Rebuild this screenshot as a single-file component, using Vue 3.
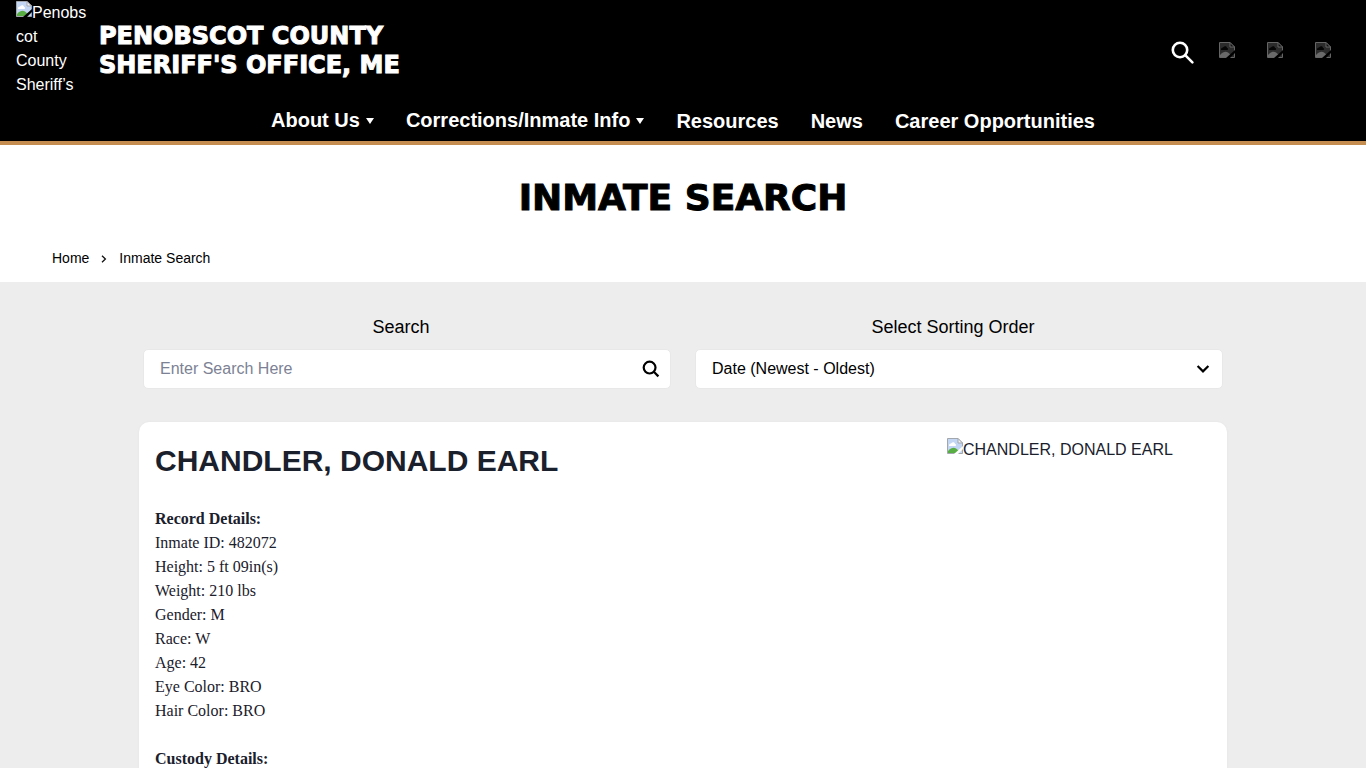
<script setup>
import { ref } from 'vue'

const query = ref('')
const order = ref('newest')

const navItems = [
  { label: 'About Us', menu: true },
  { label: 'Corrections/Inmate Info', menu: true },
  { label: 'Resources' },
  { label: 'News' },
  { label: 'Career Opportunities' },
]

const details = [
  'Inmate ID: 482072',
  'Height: 5 ft 09in(s)',
  'Weight: 210 lbs',
  'Gender: M',
  'Race: W',
  'Age: 42',
  'Eye Color: BRO',
  'Hair Color: BRO',
]
</script>

<template>
  <div class="page">
    <svg class="defs" width="0" height="0" aria-hidden="true">
      <symbol id="missing" viewBox="0 0 16 16">
        <path d="M0.5 0.5H11L15.5 5V15.5H0.5Z" fill="#c3d6f3" stroke="#a2a7ad" />
        <path d="M2 7.5C2 5.5 4 5.7 4.5 5C5.5 3.5 8 4 8 6C9.5 6 9.5 8 8 8H2Z" fill="#fff" />
        <path d="M1 15V13C4 9.5 7 9 9 10.5L12 13V15Z" fill="#58ad43" />
        <path d="M11 0.5V5H15.5Z" fill="#f4f4f4" stroke="#a2a7ad" />
        <path class="tear" d="M7 16L16 8V11L11 16Z" />
      </symbol>
    </svg>

    <header class="header">
      <div class="brand-row">
        <a class="brand" href="#">
          <span class="seal"><span class="start"><svg class="missing"><use href="#missing" /></svg>Penobs</span><wbr>cot County Sheriff’s</span>
          <span class="brand-name">PENOBSCOT COUNTY<br>SHERIFF'S OFFICE, ME</span>
        </a>
        <div class="tools">
          <button class="tool-search" type="button" aria-label="Search site">
            <svg width="24" height="24" viewBox="0 0 24 24" fill="none" stroke="#fff" stroke-width="2.6">
              <circle cx="9" cy="9" r="7.2" /><path d="M14.2 14.2L21.4 21.4" stroke-linecap="round" />
            </svg>
          </button>
          <a v-for="n in 3" :key="n" class="social" href="#" :aria-label="'Social link ' + n">
            <svg width="16" height="16" viewBox="0 0 16 16">
              <path d="M0.5 0.5H11L15.5 5V15.5H0.5Z" fill="#2c2c2c" stroke="#656565" />
              <path d="M2 7.5C2 5.5 4 5.7 4.5 5C5.5 3.5 8 4 8 6C9.5 6 9.5 8 8 8H2Z" fill="#050505" />
              <path d="M1 15V13C4 9.5 7 9 9 10.5L12 13V15Z" fill="#6a6a6a" />
              <path d="M11 0.5V5H15.5Z" fill="#111" stroke="#656565" />
              <path d="M7 16L16 8V11L11 16Z" fill="#000" />
            </svg>
          </a>
        </div>
      </div>
      <nav class="nav" aria-label="Main">
        <a v-for="item in navItems" :key="item.label" href="#" :class="{ menu: item.menu }">
          {{ item.label }}<svg v-if="item.menu" width="8" height="8" viewBox="0 0 8 8"><path d="M0 2H8L4 8Z" fill="#fff" /></svg>
        </a>
      </nav>
    </header>

    <div class="heading">
      <h1>INMATE SEARCH</h1>
      <nav class="crumbs" aria-label="Breadcrumb">
        <a href="#">Home</a>
        <svg width="6" height="10" viewBox="0 0 6 10" fill="none" stroke="#111" stroke-width="1.3"><path d="M1 2.7L4.4 6L1 9.3" /></svg>
        <span>Inmate Search</span>
      </nav>
    </div>

    <main class="content">
      <form class="filters" @submit.prevent>
        <div class="field">
          <label for="query">Search</label>
          <div class="control">
            <input id="query" v-model="query" type="text" placeholder="Enter Search Here">
            <button class="go" type="submit" aria-label="Run search">
              <svg width="18" height="18" viewBox="0 0 18 18" fill="none" stroke="#000" stroke-width="2.2">
                <circle cx="7.6" cy="7.6" r="5.9" /><path d="M11.8 11.8L16.4 16.4" />
              </svg>
            </button>
          </div>
        </div>
        <div class="field">
          <label for="order">Select Sorting Order</label>
          <div class="control">
            <select id="order" v-model="order">
              <option value="newest">Date (Newest - Oldest)</option>
              <option value="oldest">Date (Oldest - Newest)</option>
            </select>
            <svg class="chevron" width="14" height="10" viewBox="0 0 14 10" fill="none" stroke="#000" stroke-width="2.2"><path d="M1.6 2L7 7.4L12.4 2" /></svg>
          </div>
        </div>
      </form>

      <article class="card">
        <div class="record">
          <h2>CHANDLER, DONALD EARL</h2>
          <section>
            <h3>Record Details:</h3>
            <p v-for="line in details" :key="line">{{ line }}</p>
          </section>
          <section>
            <h3>Custody Details:</h3>
          </section>
        </div>
        <div class="photo"><svg class="missing"><use href="#missing" /></svg>CHANDLER, DONALD EARL</div>
      </article>
    </main>
  </div>
</template>

<style>
body {
  background: #ededed;
}
html {
  overflow: hidden;
}
</style>

<style scoped>
.page {
  height: 100vh;
  overflow: hidden;
  font: 16px/24px "Liberation Sans", Arial, sans-serif;
  color: #1a202c;
}
.page * {
  box-sizing: border-box;
}
.defs {
  display: block;
}
a {
  color: inherit;
  text-decoration: none;
}
button {
  display: flex;
  padding: 0;
  border: 0;
  background: none;
  cursor: pointer;
}
h1, h2, h3, p {
  margin: 0;
}
.missing {
  width: 16px;
  height: 16px;
  vertical-align: 1px;
}
.tear {
  fill: var(--tear, #fff);
}
.seal {
  --tear: #000;
  width: 72px;
  height: 97px;
  padding-top: 1px;
  overflow: hidden;
}
.start {
  white-space: nowrap;
}
.header {
  background: #000;
  color: #fff;
  border-bottom: 4px solid #c68d50;
}
.brand-row {
  display: flex;
  justify-content: space-between;
  padding: 0 35px 0 16px;
  height: 100px;
}
.brand {
  display: flex;
  gap: 11px;
}
.brand-name {
  align-self: center;
  padding-top: 2px;
  font: 900 24px/29px "Arial Black", "DejaVu Sans", sans-serif;
  -webkit-text-stroke: 1px currentColor;
}
.tools {
  display: flex;
  align-items: center;
  gap: 32px;
}
.tool-search {
  margin: 6px -8px 0 0;
}
.social {
  display: flex;
}
.nav {
  display: flex;
  justify-content: center;
  gap: 32px;
  height: 41px;
  padding-top: 9px;
  font-size: 20px;
  font-weight: 700;
}
.nav .menu {
  display: flex;
  align-items: center;
  gap: 6px;
  height: 22px;
}
.heading {
  background: #fff;
  padding: 29px 52px 12px;
}
h1 {
  font: 900 36px/48px "Arial Black", "DejaVu Sans", sans-serif;
  -webkit-text-stroke: 1px currentColor;
  color: #000;
  text-align: center;
}
.crumbs {
  display: flex;
  align-items: center;
  gap: 12px;
  margin-top: 24px;
  font-size: 14px;
  color: #000;
}
.content {
  max-width: 1088px;
  margin: 0 auto;
  padding-top: 32px;
}
.filters {
  display: grid;
  grid-template-columns: 1fr 1fr;
  gap: 24px;
  padding: 0 4px;
}
.field {
  color: #000;
}
.field label {
  display: block;
  margin-bottom: 10px;
  padding: 1px 12px 0 0;
  font-size: 18px;
  line-height: 24px;
  text-align: center;
}
.control {
  position: relative;
}
.control input, .control select {
  display: block;
  width: 100%;
  height: 40px;
  padding: 0 16px;
  border: 1px solid #e8e8e8;
  border-radius: 5px;
  background: #fff;
  color: #000;
  font: inherit;
  appearance: none;
}
.control input::placeholder {
  color: #7c8294;
  opacity: 1;
}
.go {
  position: absolute;
  top: 11px;
  right: 11px;
}
.chevron {
  position: absolute;
  top: 15px;
  right: 13px;
  pointer-events: none;
}
.card {
  display: flex;
  justify-content: space-between;
  margin-top: 33px;
  padding: 16px;
  min-height: 480px;
  background: #fff;
  border-radius: 10px;
  box-shadow: 0 0 2px #e2e2e2;
}
h2 {
  margin-bottom: 24px;
  font-size: 30px;
  line-height: 45px;
}
.record section {
  margin-bottom: 24px;
  font-family: "Liberation Serif", "Times New Roman", serif;
}
h3 {
  font-size: 16px;
}
.photo {
  width: 264px;
}
</style>
